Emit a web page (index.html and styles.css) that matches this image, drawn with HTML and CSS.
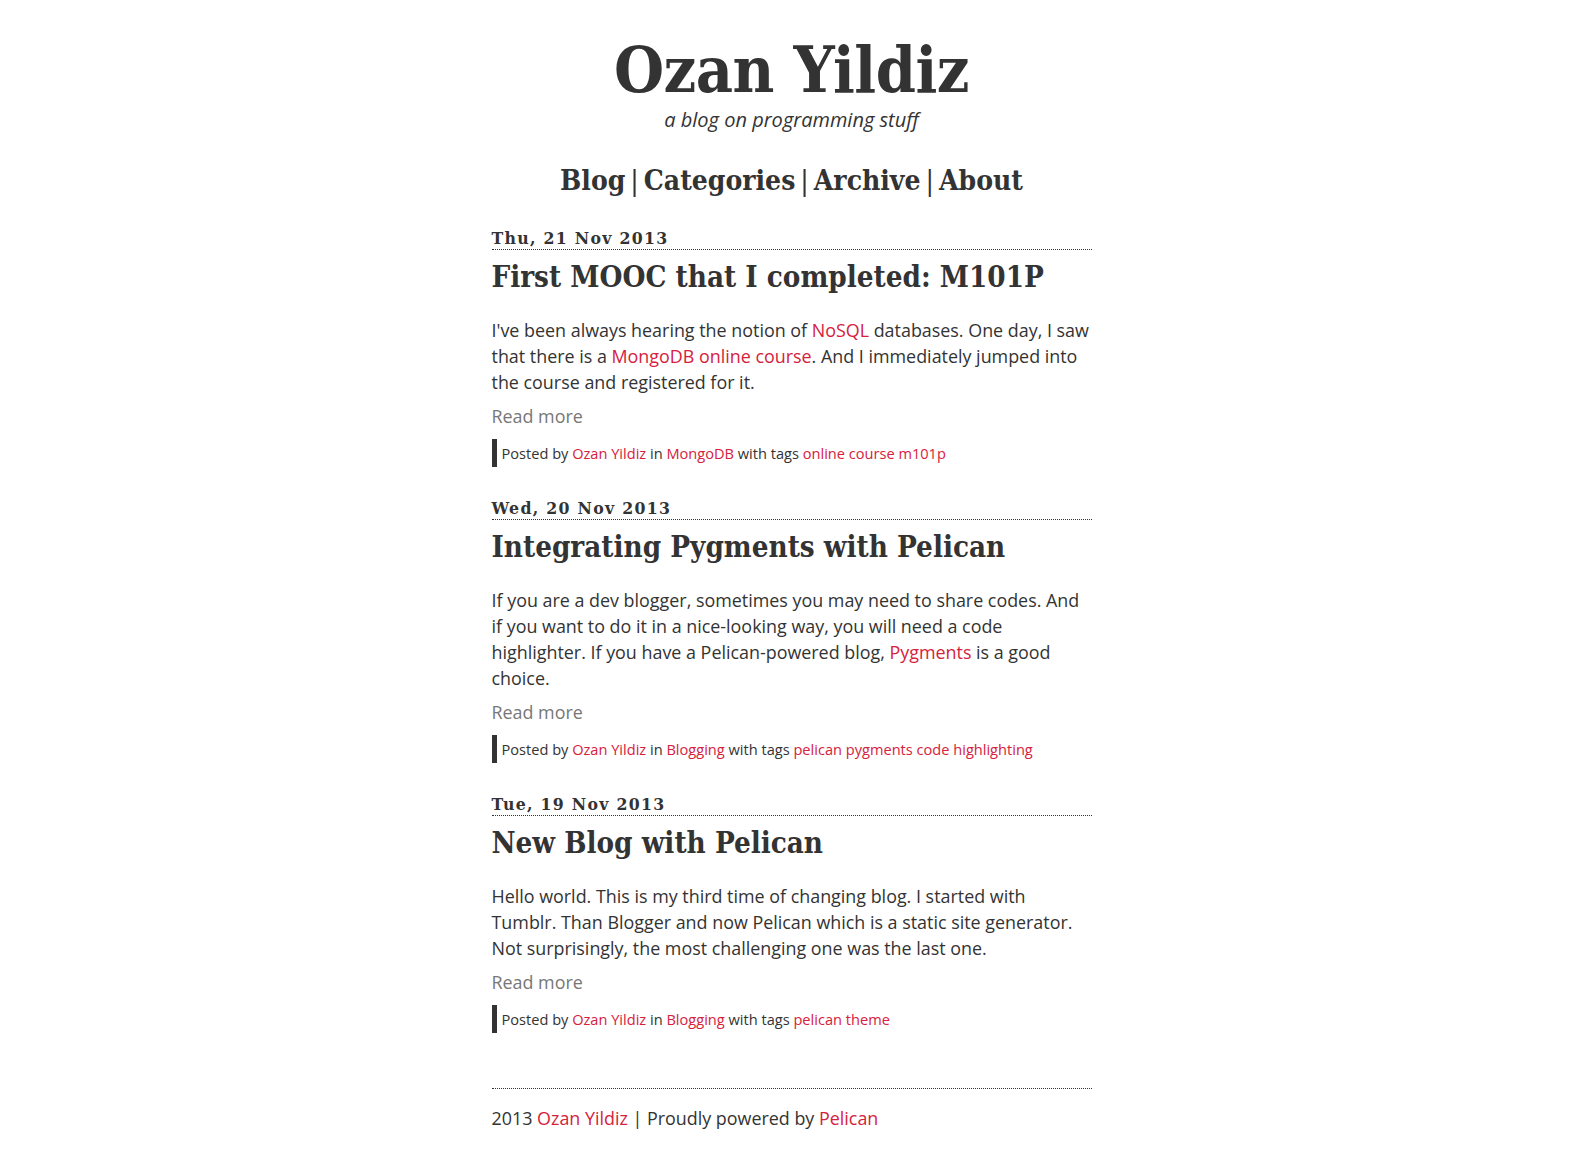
FILE: index.html
```html
<!DOCTYPE html>
<html lang="en">
<head>
<meta charset="utf-8">
<title>Ozan Yildiz</title>
<link rel="stylesheet" href="styles.css">
</head>
<body>
<div class="page">
  <header class="site-header">
    <h1 class="site-title">Ozan Yildiz</h1>
    <p class="site-tagline">a blog on programming stuff</p>
    <nav class="site-nav">
      <a href="#">Blog</a><span class="sep">|</span><a href="#">Categories</a><span class="sep">|</span><a href="#">Archive</a><span class="sep">|</span><a href="#">About</a>
    </nav>
  </header>

  <main class="posts">
    <article class="post">
      <div class="post-date">Thu, 21 Nov 2013</div>
      <h2 class="post-title">First MOOC that I completed: M101P</h2>
      <p class="post-summary">I've been always hearing the notion of <a href="#">NoSQL</a> databases. One day, I saw that there is a <a href="#">MongoDB online course</a>. And I immediately jumped into the course and registered for it.</p>
      <a class="read-more" href="#">Read more</a>
      <p class="post-meta">Posted by <a href="#">Ozan Yildiz</a> in <a href="#">MongoDB</a> with tags <a href="#">online course</a> <a href="#">m101p</a></p>
    </article>

    <article class="post">
      <div class="post-date">Wed, 20 Nov 2013</div>
      <h2 class="post-title">Integrating Pygments with Pelican</h2>
      <p class="post-summary">If you are a dev blogger, sometimes you may need to share codes. And if you want to do it in a nice-looking way, you will need a code highlighter. If you have a Pelican-powered blog, <a href="#">Pygments</a> is a good choice.</p>
      <a class="read-more" href="#">Read more</a>
      <p class="post-meta">Posted by <a href="#">Ozan Yildiz</a> in <a href="#">Blogging</a> with tags <a href="#">pelican</a> <a href="#">pygments</a> <a href="#">code highlighting</a></p>
    </article>

    <article class="post">
      <div class="post-date">Tue, 19 Nov 2013</div>
      <h2 class="post-title">New Blog with Pelican</h2>
      <p class="post-summary">Hello world. This is my third time of changing blog. I started with Tumblr. Than Blogger and now Pelican which is a static site generator. Not surprisingly, the most challenging one was the last one.</p>
      <a class="read-more" href="#">Read more</a>
      <p class="post-meta">Posted by <a href="#">Ozan Yildiz</a> in <a href="#">Blogging</a> with tags <a href="#">pelican</a> <a href="#">theme</a></p>
    </article>
  </main>

  <footer class="site-footer">
    2013 <a href="#">Ozan Yildiz</a> | Proudly powered by <a href="#">Pelican</a>
  </footer>
</div>
</body>
</html>
```

FILE: styles.css
```css
html, body {
  margin: 0;
  padding: 0;
  background: #fff;
}

body {
  color: #333;
  font-family: "Open Sans", "Noto Sans", sans-serif;
  font-size: 17.9px;
  line-height: 26px;
}

a {
  color: #d6213c;
  text-decoration: none;
}

.page {
  width: 600px;
  margin: 0 auto;
}

.site-header {
  text-align: center;
  padding-top: 33px;
}

.site-title {
  margin: 0;
  font-family: "DejaVu Serif Condensed", "DejaVu Serif", serif;
  font-stretch: condensed;
  font-weight: bold;
  font-size: 64px;
  line-height: 74px;
  letter-spacing: -0.5px;
  color: #333;
}

.site-tagline {
  margin: 0;
  font-style: italic;
  font-size: 20px;
  line-height: 26px;
  color: #333;
}

.site-nav {
  margin-top: 28px;
  font-family: "DejaVu Serif Condensed", "DejaVu Serif", serif;
  font-stretch: condensed;
  font-weight: bold;
  font-size: 28px;
  line-height: 40px;
}

.site-nav a {
  color: #333;
}

.site-nav .sep {
  margin: 0 5px;
  font-weight: normal;
}

.posts {
  margin-top: 26px;
}

.post {
  margin-bottom: 30px;
}

.post-date {
  font-family: "DejaVu Serif Condensed", "DejaVu Serif", serif;
  font-stretch: condensed;
  font-weight: bold;
  font-size: 17.5px;
  letter-spacing: 1.3px;
  line-height: 22px;
  border-bottom: 1px dotted #333;
}

.post-title {
  margin: 7px 0 20px;
  font-family: "DejaVu Serif Condensed", "DejaVu Serif", serif;
  font-stretch: condensed;
  font-weight: bold;
  font-size: 29.3px;
  line-height: 40px;
}

.post-summary {
  margin: 0 0 8px;
}

.read-more {
  display: block;
  color: #777;
  line-height: 26px;
}

.post-meta {
  margin: 10px 0 0;
  border-left: 5px solid #333;
  padding-left: 5px;
  font-size: 14.6px;
  line-height: 28px;
}

.site-footer {
  margin-top: 55px;
  border-top: 1px dotted #333;
  padding-top: 16px;
  padding-bottom: 40px;
}
```
